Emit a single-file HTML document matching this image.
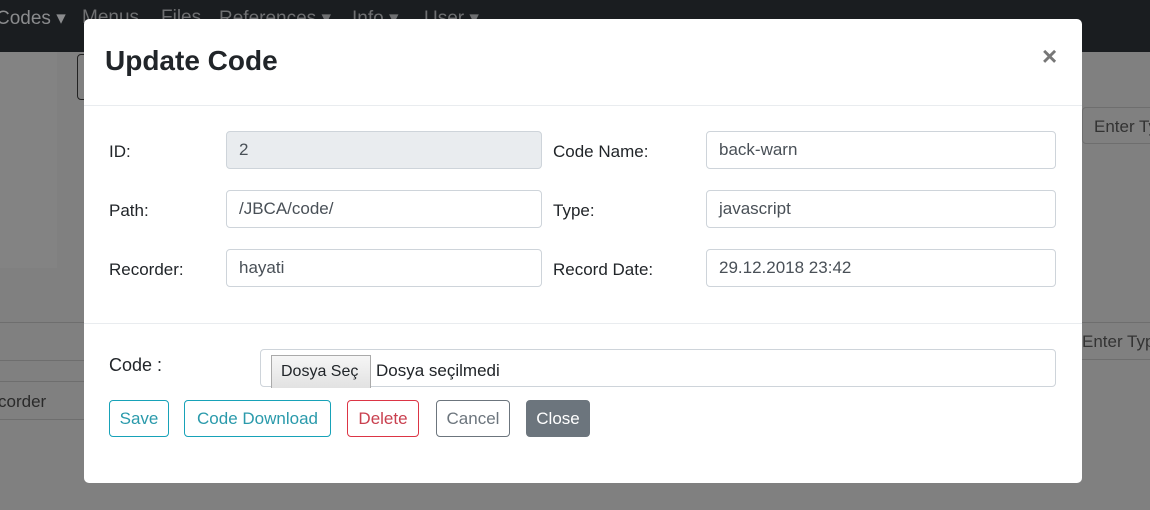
<!DOCTYPE html>
<html><head><meta charset="utf-8"><style>
*{box-sizing:border-box}
body{margin:0;width:1150px;height:510px;background:#808080;font-family:"Liberation Sans",sans-serif;position:relative;overflow:hidden;color:#212529}
.nav{position:absolute;left:0;top:0;width:1150px;height:52px;background:#1a1d20;color:#6f7072;font-size:19px}
.nav span{position:absolute;top:7px}
.a{position:absolute}
.modal{position:absolute;left:84px;top:19px;width:998px;height:464px;background:#fff;border-radius:5px}
.inp{position:absolute;height:38px;border:1px solid #ced4da;border-radius:4px;font-size:17px;color:#495057;padding:9px 12px;line-height:18px}
.lbl{position:absolute;font-size:17px;color:#212529}
.btn{position:absolute;top:381px;height:37px;border:1px solid;border-radius:4px;font-size:17px;text-align:center;line-height:35px}
</style></head><body>
<div class="nav"><span style="left:-4px;color:#8a8b8d">Codes ▾</span><span style="left:82px">Menus</span><span style="left:161px">Files</span><span style="left:219px">References ▾</span><span style="left:352px">Info ▾</span><span style="left:424px">User ▾</span></div>
<div class="a" style="left:0;top:52px;width:57px;height:216px;background:#838383"></div>
<div class="a" style="left:77px;top:54px;width:12px;height:46px;border:1px solid #222;border-radius:4px"></div>
<div class="a" style="left:0;top:322px;width:84px;border-top:1px solid #6e6e6e"></div>
<div class="a" style="left:0;top:360px;width:84px;border-top:1px solid #6e6e6e"></div>
<div class="a" style="left:0;top:381px;width:84px;border-top:1px solid #6e6e6e"></div>
<div class="a" style="left:0;top:419px;width:84px;border-top:1px solid #6e6e6e"></div>
<div class="a" style="left:-2px;top:392px;font-size:17px;color:#2a2a2a">corder</div>
<div class="a" style="left:1082px;top:107px;width:80px;height:37px;border:1px solid #6e6e6e;border-radius:4px;font-size:17px;color:#333;padding:9px 0 0 11px">Enter Ty</div>
<div class="a" style="left:1082px;top:322px;width:80px;height:38px;border-top:1px solid #6e6e6e;border-bottom:1px solid #6e6e6e;font-size:17px;color:#333;padding:9px 0 0 0">Enter Typ</div>
<div class="modal">
<div class="a" style="left:21px;top:26px;font-size:28px;font-weight:bold;color:#212529">Update Code</div>
<div class="a" style="left:958px;top:22px;font-size:26px;color:#777;font-weight:bold">×</div>
<div class="a" style="left:0;top:86px;width:998px;border-top:1px solid #e9ecef"></div>
<div class="lbl" style="left:25px;top:123px">ID:</div>
<div class="lbl" style="left:25px;top:182px">Path:</div>
<div class="lbl" style="left:25px;top:241px">Recorder:</div>
<div class="inp" style="left:142px;top:112px;width:316px;background:#e9ecef">2</div>
<div class="inp" style="left:142px;top:171px;width:316px">/JBCA/code/</div>
<div class="inp" style="left:142px;top:230px;width:316px">hayati</div>
<div class="lbl" style="left:469px;top:123px">Code Name:</div>
<div class="lbl" style="left:469px;top:182px">Type:</div>
<div class="lbl" style="left:469px;top:241px">Record Date:</div>
<div class="inp" style="left:622px;top:112px;width:350px">back-warn</div>
<div class="inp" style="left:622px;top:171px;width:350px">javascript</div>
<div class="inp" style="left:622px;top:230px;width:350px">29.12.2018 23:42</div>
<div class="a" style="left:0;top:304px;width:998px;border-top:1px solid #e9ecef"></div>
<div class="lbl" style="left:25px;top:336px;font-size:18px">Code :</div>
<div class="inp" style="left:176px;top:330px;width:796px;padding:0;color:#212529"><div class="a" style="left:10px;top:5px;width:100px;height:33px;background:linear-gradient(#f6f6f6,#e2e2e2);border:1px solid #aaa;border-bottom:none;padding:7px 0 0 9px;line-height:18px;font-size:16px">Dosya Seç</div><div class="a" style="left:115px;top:12px;line-height:18px">Dosya seçilmedi</div></div>
<div class="btn" style="left:25px;width:60px;color:#2a9aab;border-color:#17a2b8">Save</div>
<div class="btn" style="left:100px;width:147px;color:#2a9aab;border-color:#17a2b8">Code Download</div>
<div class="btn" style="left:263px;width:72px;color:#c9404f;border-color:#dc3545">Delete</div>
<div class="btn" style="left:352px;width:74px;color:#6c757d;border-color:#6c757d">Cancel</div>
<div class="btn" style="left:442px;width:64px;color:#fff;background:#6c757d;border-color:#6c757d">Close</div>
</div>
</body></html>
